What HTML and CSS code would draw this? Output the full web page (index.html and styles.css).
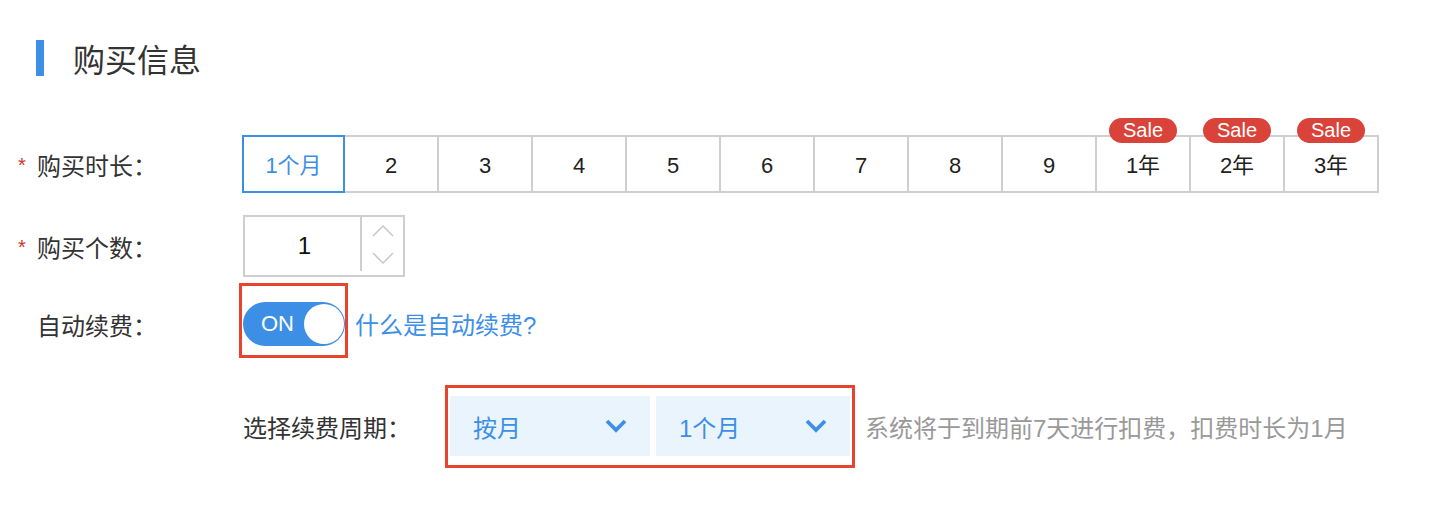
FILE: index.html
```html
<!DOCTYPE html>
<html lang="zh-CN">
<head>
    <meta charset="UTF-8">
    <meta name="viewport" content="width=device-width, initial-scale=1.0">
    <title>购买信息</title>
    <link rel="stylesheet" href="styles.css">
</head>
<body>

    <div class="page">
        <div class="title">
            <span class="title-bar"></span>
            <h2>购买信息</h2>
        </div>

        <!-- 购买时长 -->
        <div class="row row-duration">
            <div class="label"><span class="req">*</span>购买时长：</div>
            <ul class="durations">
                <li class="active">1个月</li>
                <li>2</li>
                <li>3</li>
                <li>4</li>
                <li>5</li>
                <li>6</li>
                <li>7</li>
                <li>8</li>
                <li>9</li>
                <li>1年<span class="sale">Sale</span></li>
                <li>2年<span class="sale">Sale</span></li>
                <li>3年<span class="sale">Sale</span></li>
            </ul>
        </div>

        <!-- 购买个数 -->
        <div class="row row-count">
            <div class="label"><span class="req">*</span>购买个数：</div>
            <div class="stepper">
                <div class="stepper-value">1</div>
                <div class="stepper-arrows">
                    <svg width="22" height="12" viewBox="0 0 22 12"><polyline points="1,11 11,1 21,11" fill="none" stroke="#c8c8c8" stroke-width="1.5"/></svg>
                    <svg width="22" height="12" viewBox="0 0 22 12"><polyline points="1,1 11,11 21,1" fill="none" stroke="#c8c8c8" stroke-width="1.5"/></svg>
                </div>
            </div>
        </div>

        <!-- 自动续费 -->
        <div class="row row-toggle">
            <div class="label label-toggle">自动续费：</div>
            <div class="mark-frame toggle-frame">
                <div class="toggle">
                    <span class="toggle-text">ON</span>
                    <span class="toggle-knob"></span>
                </div>
            </div>
            <a class="link" href="#">什么是自动续费?</a>
        </div>

        <!-- 续费周期 -->
        <div class="row row-cycle">
            <div class="sub-label">选择续费周期：</div>
            <div class="mark-frame cycle-frame">
                <div class="select select-type">
                    <span>按月</span>
                    <svg width="22" height="14" viewBox="0 0 22 14"><polyline points="2,2 11,11 20,2" fill="none" stroke="#3d8fe6" stroke-width="3.8"/></svg>
                </div>
                <div class="select select-period">
                    <span>1个月</span>
                    <svg width="22" height="14" viewBox="0 0 22 14"><polyline points="2,2 11,11 20,2" fill="none" stroke="#3d8fe6" stroke-width="3.8"/></svg>
                </div>
            </div>
            <div class="hint">系统将于到期前7天进行扣费，扣费时长为1月</div>
        </div>
    </div>

</body>
</html>
```

FILE: styles.css
```css
body {
    font-family: "Liberation Sans", "Noto Sans CJK SC", sans-serif;
    margin: 0;
    padding: 0;
    background-color: white;
    color: #333;
}
.page {
    padding-top: 40px;
}
.title {
    display: flex;
    align-items: center;
    margin-left: 36px;
    height: 36px;
}
.title-bar {
    width: 8px;
    height: 36px;
    background-color: #3d8fe6;
}
.title h2 {
    margin: 0 0 0 29px;
    font-size: 32px;
    font-weight: normal;
    color: #333;
}
.row {
    display: flex;
    align-items: center;
}
.label {
    width: 242px;
    box-sizing: border-box;
    padding-left: 37px;
    font-size: 24px;
    color: #333;
}
.req {
    display: inline-block;
    width: 19px;
    margin-left: -19px;
    color: #d0342c;
    font-size: 20px;
    vertical-align: 3px;
}

/* 购买时长 */
.row-duration {
    margin-top: 59px;
}
.durations {
    display: flex;
    list-style: none;
    margin: 0;
    padding: 0;
}
.durations li {
    position: relative;
    width: 94px;
    height: 58px;
    box-sizing: border-box;
    border: 2px solid #cfcfcf;
    border-left: none;
    text-align: center;
    line-height: 57px;
    font-size: 22px;
    color: #222;
}
.durations li.active {
    width: 103px;
    border: 2px solid #3d8fe6;
    color: #3d8fe6;
}
.sale {
    position: absolute;
    top: -19px;
    left: 50%;
    transform: translateX(-50%);
    width: 68px;
    height: 25px;
    border-radius: 13px;
    background-color: #d9433a;
    color: white;
    font-size: 20px;
    line-height: 25px;
}

/* 购买个数 */
.row-count {
    margin-top: 22px;
}
.stepper {
    display: flex;
    width: 162px;
    height: 62px;
    box-sizing: border-box;
    border: 2px solid #cfcfcf;
    margin-left: 1px;
}
.stepper-value {
    flex: 1;
    text-align: center;
    line-height: 58px;
    font-size: 24px;
    color: #111;
    padding-left: 4px;
}
.stepper-arrows {
    width: 41px;
    height: 54px;
    border-left: 2px solid #cfcfcf;
    display: flex;
    flex-direction: column;
    align-items: center;
    justify-content: space-around;
}

/* 红色标记框 */
.mark-frame {
    border: 3px solid #e8432d;
}

/* 自动续费 */
.row-toggle {
    margin-top: 6px;
}
.label-toggle {
    width: 239px;
    padding-top: 7px;
}
.toggle-frame {
    padding: 16px 0 9px 1px;
}
.toggle {
    display: flex;
    align-items: center;
    width: 102px;
    height: 44px;
    box-sizing: border-box;
    padding: 2px 1px 2px 18px;
    border-radius: 22px;
    background-color: #3d8fe6;
}
.toggle-text {
    color: white;
    font-size: 22px;
}
.toggle-knob {
    margin-left: auto;
    width: 40px;
    height: 40px;
    border-radius: 50%;
    background-color: white;
}
.link {
    margin-left: 7px;
    padding-top: 6px;
    color: #3d8fe6;
    font-size: 24px;
    text-decoration: none;
}

/* 续费周期 */
.row-cycle {
    margin-top: 27px;
    padding-left: 243px;
}
.sub-label {
    width: 202px;
    font-size: 24px;
    color: #333;
}
.cycle-frame {
    display: flex;
    gap: 6px;
    padding: 8px 2px 9px 2px;
}
.select {
    display: flex;
    align-items: center;
    justify-content: space-between;
    height: 60px;
    box-sizing: border-box;
    padding: 0 23px 0 23px;
    background-color: #e9f4fc;
    color: #3d8fe6;
    font-size: 24px;
}
.select-type {
    width: 200px;
}
.select-period {
    width: 194px;
}
.hint {
    margin-left: 10px;
    font-size: 24px;
    color: #999;
}
```
